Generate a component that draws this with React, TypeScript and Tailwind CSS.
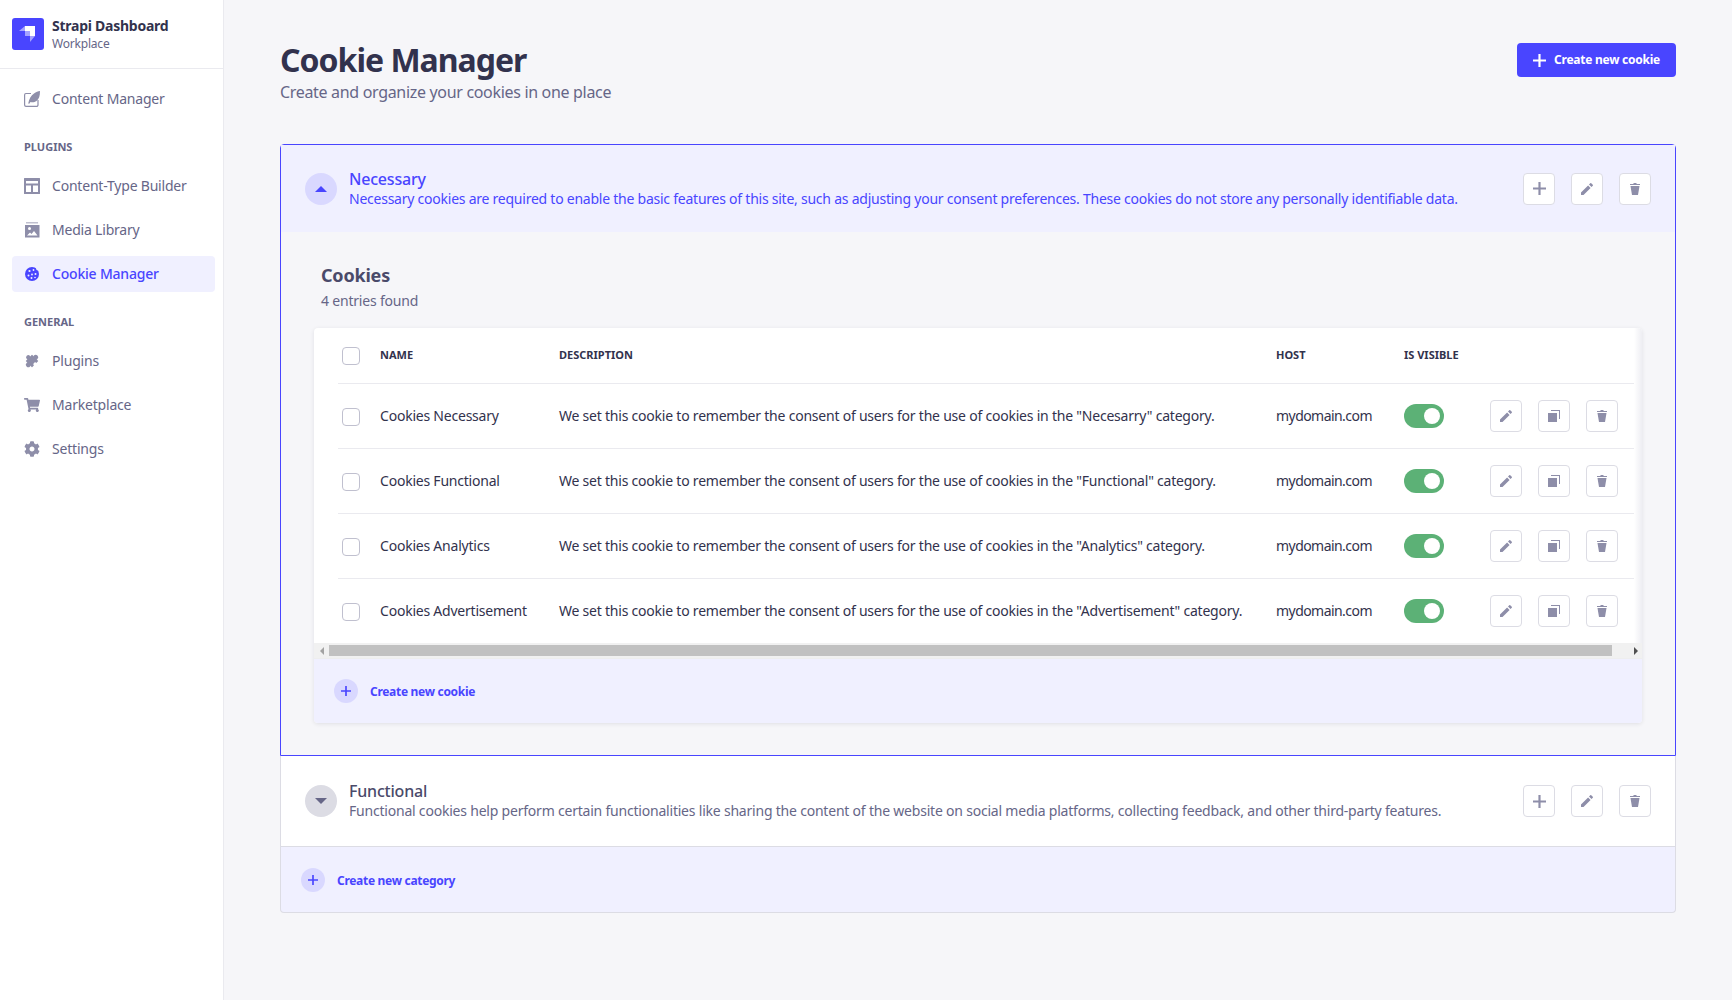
import { FaCog, FaShoppingCart } from "react-icons/fa";

const Pencil = ({ className = "" }: { className?: string }) => (
  <svg viewBox="0 0 24 24" className={className} fill="currentColor">
    <path
      fillRule="evenodd"
      clipRule="evenodd"
      d="M23.604 3.514c.528.528.528 1.36 0 1.887l-2.622 2.607-4.99-4.99L18.6.396a1.322 1.322 0 011.887 0l3.118 3.118zM0 24v-4.99l14.2-14.2 4.99 4.99L4.99 24H0z"
    />
  </svg>
);

const Trash = ({ className = "" }: { className?: string }) => (
  <svg viewBox="0 0 24 24" className={className} fill="currentColor">
    <path d="M3.236 6.149a.2.2 0 00-.197.233L6 24h12l2.96-17.618a.2.2 0 00-.196-.233H3.236zM21.8 1.983c.11 0 .2.09.2.2v1.584a.2.2 0 01-.2.2H2.2a.2.2 0 01-.2-.2V2.183c0-.11.09-.2.2-.2h5.511c.9 0 1.631-1.09 1.631-1.983h5.316c0 .894.73 1.983 1.631 1.983H21.8z" />
  </svg>
);

const Duplicate = ({ className = "" }: { className?: string }) => (
  <svg viewBox="0 0 24 24" className={className} fill="currentColor">
    <rect x="0" y="6" width="18" height="18" />
    <path d="M6 0h18v18h-2V2H6z" />
  </svg>
);

const Plus = ({ className = "" }: { className?: string }) => (
  <svg viewBox="0 0 24 24" className={className} fill="currentColor">
    <path d="M10 0h4v10h10v4H14v10h-4V14H0v-4h10z" />
  </svg>
);

const Logo = () => (
  <svg viewBox="0 0 32 32" className="h-8 w-8">
    <rect width="32" height="32" rx="3" fill="#4945ff" />
    <path d="M13 8h10v10h-5v-5h-5z" fill="#fff" />
    <path d="M7 13l6-5v5z" fill="#fff" opacity="0.5" />
    <path d="M13 13h5v5h-5z" fill="#fff" opacity="0.5" />
    <path d="M18 18h5l-5 6z" fill="#fff" opacity="0.5" />
  </svg>
);

const FeatherIcon = () => (
  <svg viewBox="0 0 16 16" className="h-4 w-4">
    <path
      d="M7 2.5H2A1.500 1.500 0 00.6 4v10A1.500 1.500 0 002 15.400h10.500a1.500 1.500 0 001.500-1.500V9"
      fill="none"
      stroke="#8e8ea9"
      strokeWidth="1.2"
    />
    <path
      d="M16 0c0 5-1 8-3.500 10-2 1.500-4.500 1.500-6 1L5 13l-.7-.7C5 8 7 4.500 10 2.500 12 1 14 .3 16 0z"
      fill="#8e8ea9"
    />
  </svg>
);

const LayoutIcon = () => (
  <svg viewBox="0 0 16 16" className="h-4 w-4">
    <path
      fillRule="evenodd"
      fill="#8e8ea9"
      d="M0 .5A.5.5 0 01.5 0h15a.5.5 0 01.5.5v15a.5.5 0 01-.5.5H.5a.5.5 0 01-.5-.5zM2 3v2.500h12V3zM2 7.500V14h5V7.500zM9 7.500V14h5V7.500z"
    />
  </svg>
);

const MediaIcon = () => (
  <svg viewBox="0 0 16 16" className="h-4 w-4">
    <rect x="2" y="0" width="12" height="1.5" fill="#c0c0cf" />
    <path
      fillRule="evenodd"
      fill="#8e8ea9"
      d="M1 3h14.500v12.500H1zM3 13.500h10.500l-3.500-4.500-2.500 3-1.500-1.500zM5.500 5a1.500 1.500 0 100 3 1.500 1.500 0 000-3z"
    />
  </svg>
);

const CookieIcon = () => (
  <svg viewBox="0 0 16 16" className="h-4 w-4">
    <circle cx="8" cy="8" r="7" fill="#4945ff" />
    <circle cx="14" cy="2.500" r="2" fill="#f0f0ff" />
    <circle cx="5.500" cy="5" r="1.100" fill="#f0f0ff" />
    <circle cx="9.500" cy="4" r="0.900" fill="#f0f0ff" />
    <circle cx="11.500" cy="8" r="1" fill="#f0f0ff" />
    <circle cx="8" cy="8.500" r="0.900" fill="#f0f0ff" />
    <circle cx="4.500" cy="9.500" r="1" fill="#f0f0ff" />
    <circle cx="7.500" cy="12" r="1" fill="#f0f0ff" />
    <circle cx="11" cy="11.500" r="0.800" fill="#f0f0ff" />
  </svg>
);

const PuzzleIcon = () => (
  <svg viewBox="0 0 16 16" className="h-4 w-4">
    <g transform="rotate(45 8 8)" fill="#8e8ea9">
      <rect x="3.500" y="3.500" width="9" height="9" rx="0.500" />
      <circle cx="8" cy="2.800" r="2.500" />
      <circle cx="8" cy="13.200" r="2.500" />
      <circle cx="2.800" cy="8" r="2.200" />
      <circle cx="12.500" cy="8" r="1.800" fill="#fff" />
    </g>
  </svg>
);

const navIcon = "h-4 w-4 text-[#8e8ea9]";

const NavItem = ({ icon, label, active }: { icon: React.ReactNode; label: string; active?: boolean }) => (
  <div
    className={`flex h-9 items-center gap-3 rounded pl-3 text-sm ${
      active ? "bg-[#f0f0ff] font-medium text-[#4945ff]" : "text-[#666687]"
    }`}
  >
    {icon}
    <span>{label}</span>
  </div>
);

const SectionLabel = ({ children }: { children: string }) => (
  <div className="mb-[13px] mt-[22px] pl-3 text-[11px] font-bold leading-4 tracking-normal text-[#666687]">
    {children}
  </div>
);

const Sidebar = () => (
  <aside className="w-[224px] shrink-0 border-r border-[#eaeaef] bg-white">
    <div className="flex h-[69px] items-center gap-[8px] border-b border-[#eaeaef] pl-3">
      <Logo />
      <div>
        <div className="text-sm font-bold leading-[18px] tracking-[-0.25px] text-[#32324d]">Strapi Dashboard</div>
        <div className="mt-px text-xs leading-4 text-[#666687]">Workplace</div>
      </div>
    </div>
    <nav className="pl-3 pr-2 pt-3">
      <NavItem icon={<FeatherIcon />} label="Content Manager" />
      <SectionLabel>PLUGINS</SectionLabel>
      <div className="flex flex-col gap-2">
        <NavItem icon={<LayoutIcon />} label="Content-Type Builder" />
        <NavItem icon={<MediaIcon />} label="Media Library" />
        <NavItem icon={<CookieIcon />} label="Cookie Manager" active />
      </div>
      <SectionLabel>GENERAL</SectionLabel>
      <div className="flex flex-col gap-2">
        <NavItem icon={<PuzzleIcon />} label="Plugins" />
        <NavItem icon={<FaShoppingCart className={navIcon} />} label="Marketplace" />
        <NavItem icon={<FaCog className={navIcon} />} label="Settings" />
      </div>
    </nav>
  </aside>
);

const IconButton = ({ children }: { children: React.ReactNode }) => (
  <button className="flex h-8 w-8 items-center justify-center rounded border border-[#dcdce4] bg-white text-[#8e8ea9]">
    {children}
  </button>
);

const CategoryActions = () => (
  <div className="flex gap-4">
    <IconButton>
      <Plus className="h-[13px] w-[13px]" />
    </IconButton>
    <IconButton>
      <Pencil className="h-3 w-3" />
    </IconButton>
    <IconButton>
      <Trash className="h-3 w-3" />
    </IconButton>
  </div>
);

const Checkbox = () => <div className="h-[18px] w-[18px] rounded border border-[#c0c0cf] bg-white" />;

const cookies = [
  { name: "Cookies Necessary", category: "Necesarry" },
  { name: "Cookies Functional", category: "Functional" },
  { name: "Cookies Analytics", category: "Analytics" },
  { name: "Cookies Advertisement", category: "Advertisement" },
];

const CookieTable = () => (
  <div className="relative overflow-hidden rounded bg-white shadow-[0_1px_4px_rgba(33,33,52,0.1)]">
    <div className="pl-6 pr-2">
      <div className="flex h-[56px] items-center border-b border-[#eaeaef] pl-1 text-[11px] font-bold tracking-normal text-[#32324d]">
        <div className="w-[38px]">
          <Checkbox />
        </div>
        <div className="w-[179px]">NAME</div>
        <div className="w-[717px]">DESCRIPTION</div>
        <div className="w-[128px]">HOST</div>
        <div>IS VISIBLE</div>
      </div>
      {cookies.map((c, i) => (
        <div
          key={c.name}
          className={`flex items-center pl-1 text-sm tracking-[-0.22px] text-[#32324d] ${
            i < cookies.length - 1 ? "h-[65px] border-b border-[#eaeaef]" : "h-16"
          }`}
        >
          <div className="mt-0.5 w-[38px]">
            <Checkbox />
          </div>
          <div className="w-[179px]">{c.name}</div>
          <div className="w-[717px]">
            We set this cookie to remember the consent of users for the use of cookies in the "{c.category}" category.
          </div>
          <div className="w-[128px] tracking-[-0.55px]">mydomain.com</div>
          <div className="w-[86px]">
            <div className="flex h-6 w-10 items-center justify-end rounded-full bg-[#5cb176] pr-1">
              <div className="h-4 w-4 rounded-full bg-white" />
            </div>
          </div>
          <div className="flex gap-4">
            <IconButton>
              <Pencil className="h-3 w-3" />
            </IconButton>
            <IconButton>
              <Duplicate className="h-3 w-3" />
            </IconButton>
            <IconButton>
              <Trash className="h-3 w-3" />
            </IconButton>
          </div>
        </div>
      ))}
    </div>
    {/* right edge fade of the scrolling table */}
    <div className="absolute right-0 top-0 h-[315px] w-2 bg-gradient-to-r from-white to-[#eeeef3]" />
    <div className="flex h-4 items-center border-b border-[#eeeeee] bg-[#f1f1f1]">
      <div className="flex w-[15px] justify-center">
        <div className="h-0 w-0 border-y-4 border-r-4 border-y-transparent border-r-[#a3a3a3]" />
      </div>
      <div className="h-[11px] w-[1283px] bg-[#c1c1c1]" />
      <div className="flex flex-1 justify-end pr-[4px]">
        <div className="h-0 w-0 border-y-4 border-l-4 border-y-transparent border-l-[#505050]" />
      </div>
    </div>
    <div className="flex h-16 items-center gap-3 bg-[#f0f0ff] pl-5">
      <div className="flex h-6 w-6 items-center justify-center rounded-full bg-[#d9d8ff] text-[#4945ff]">
        <Plus className="h-[10px] w-[10px]" />
      </div>
      <span className="pt-px text-xs font-bold tracking-[-0.3px] text-[#4945ff]">Create new cookie</span>
    </div>
  </div>
);

export default function App() {
  return (
    <div className="flex min-h-[1000px] bg-[#f6f6f9] font-['Noto_Sans',sans-serif] tracking-[-0.2px]">
      <Sidebar />
      <main className="min-w-0 flex-1 px-14">
        <div className="flex h-[144px] items-start justify-between pt-10">
          <div>
            <h1 className="text-[32px] font-bold leading-10 tracking-[-1px] text-[#32324d]">Cookie Manager</h1>
            <p className="mt-0.5 text-base leading-5 tracking-[-0.32px] text-[#666687]">
              Create and organize your cookies in one place
            </p>
          </div>
          <button className="mt-[3px] flex h-[34px] items-center gap-2 rounded bg-[#4945ff] px-4 text-xs font-bold tracking-[-0.25px] text-white">
            <Plus className="h-[13px] w-[13px]" />
            Create new cookie
          </button>
        </div>

        {/* Necessary, open */}
        <div className="rounded-t border border-[#4945ff]">
          <div className="flex h-[87px] items-center bg-[#f0f0ff] px-6">
            <div className="flex h-8 w-8 shrink-0 items-center justify-center rounded-full bg-[#d9d8ff]">
              <div className="h-0 w-0 border-x-[6px] border-b-[6px] border-x-transparent border-b-[#4945ff]" />
            </div>
            <div className="ml-3 flex-1 text-[#4945ff]">
              <div className="text-base font-medium leading-5">Necessary</div>
              <div className="text-sm leading-5 tracking-[-0.24px]">
                Necessary cookies are required to enable the basic features of this site, such as adjusting your consent
                preferences. These cookies do not store any personally identifiable data.
              </div>
            </div>
            <CategoryActions />
          </div>
          <div className="px-[33px] pb-8 pt-[31px]">
            <h2 className="ml-[7px] text-lg font-bold leading-6 text-[#4a4a6a]">Cookies</h2>
            <p className="mb-[17px] ml-[7px] mt-1 text-sm leading-5 text-[#666687]">4 entries found</p>
            <CookieTable />
          </div>
        </div>

        {/* Functional, closed */}
        <div className="flex h-[91px] items-center border-x border-b border-[#dcdce4] bg-white px-6">
          <div className="flex h-8 w-8 shrink-0 items-center justify-center rounded-full bg-[#dcdce4]">
            <div className="h-0 w-0 border-x-[6px] border-t-[6px] border-x-transparent border-t-[#666687]" />
          </div>
          <div className="ml-3 flex-1">
            <div className="text-base font-medium leading-5 text-[#4a4a6a]">Functional</div>
            <div className="text-sm leading-5 tracking-[-0.21px] text-[#666687]">
              Functional cookies help perform certain functionalities like sharing the content of the website on social
              media platforms, collecting feedback, and other third-party features.
            </div>
          </div>
          <CategoryActions />
        </div>
        <div className="flex h-[66px] items-center gap-3 rounded-b border-x border-b border-[#dcdce4] bg-[#f0f0ff] pl-5">
          <div className="flex h-6 w-6 items-center justify-center rounded-full bg-[#d9d8ff] text-[#4945ff]">
            <Plus className="h-[10px] w-[10px]" />
          </div>
          <span className="pt-[2px] text-xs font-bold tracking-[-0.3px] text-[#4945ff]">Create new category</span>
        </div>
      </main>
    </div>
  );
}
